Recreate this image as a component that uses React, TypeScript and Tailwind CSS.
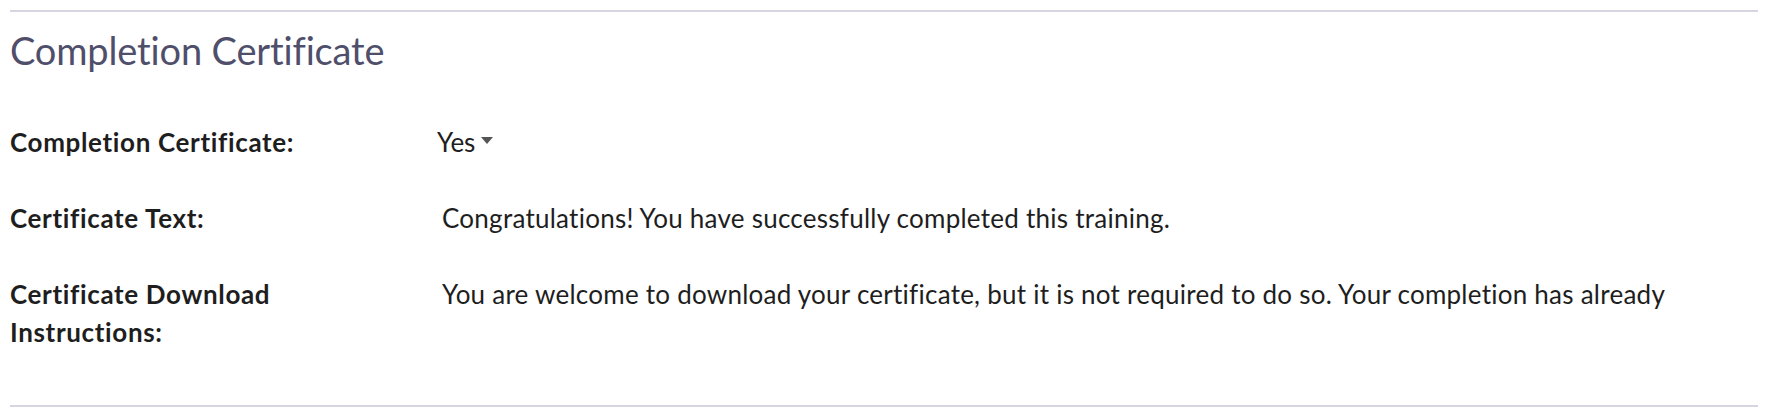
import { ReactNode } from 'react';

function Row({ label, children }: { label: ReactNode; children: ReactNode }) {
  return (
    <div className="grid grid-cols-[432px_1fr] text-[26px] leading-[38px] text-[#1e1e1e]">
      <div className="font-bold tracking-[0.65px] pr-8">{label}</div>
      <div className="tracking-[0.25px]">{children}</div>
    </div>
  );
}

export default function App() {
  return (
    <div className="w-[1768px] h-[416px] bg-white px-[10px] pt-[10px] font-['Lato','Noto_Sans',sans-serif] [font-variant-ligatures:none] overflow-hidden">
      <div className="h-[2px] bg-[#d6d6e2]" />
      <h2 className="mt-[17px] text-[38px] leading-[43px] font-normal text-[#4f4f6b] tracking-[-0.15px]">
        Completion Certificate
      </h2>

      <div className="mt-[51px] flex flex-col gap-[38px]">
        <Row label="Completion Certificate:">
          <span className="-ml-[5px] inline-flex items-center gap-[6px] tracking-normal">
            Yes
            <svg width="12" height="7" viewBox="0 0 12 7" className="mt-[-4px]">
              <path d="M0 0 H12 L6 7 Z" fill="#555555" />
            </svg>
          </span>
        </Row>
        <Row label="Certificate Text:">
          Congratulations! You have successfully completed this training.
        </Row>
        <Row
          label={
            <>
              Certificate Download
              <br />
              Instructions:
            </>
          }
        >
          <span className="whitespace-nowrap">
            You are welcome to download your certificate, but it is not required to do so. Your completion has already
          </span>
        </Row>
      </div>

      <div className="mt-[54px] h-[2px] bg-[#d6d6e2]" />
    </div>
  );
}
